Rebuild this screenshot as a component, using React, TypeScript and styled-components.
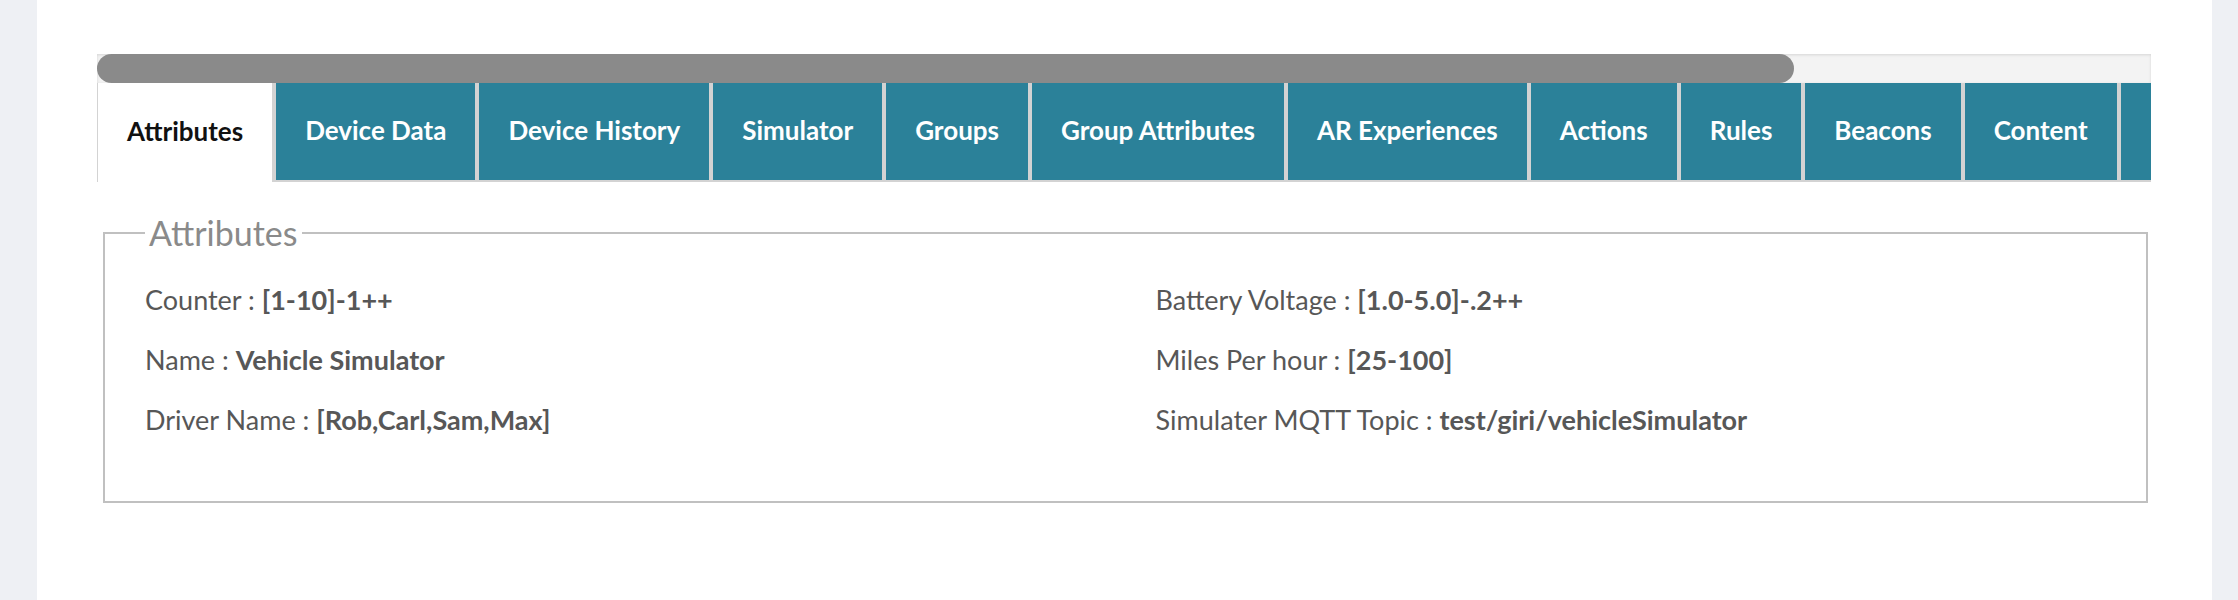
import React from 'react'
import styled, { createGlobalStyle } from 'styled-components'

const GlobalStyle = createGlobalStyle`
  html,
  body {
    margin: 0;
    padding: 0;
    height: 100%;
  }
  body {
    font-family: Lato, 'Noto Sans', sans-serif;
    background: #fff;
  }
  #root {
    height: 100%;
  }
`

const Page = styled.div`
  display: flex;
  height: 100%;
  min-height: 600px;
`
const Rail = styled.div<{ $width: number }>`
  flex: 0 0 ${(p) => p.$width}px;
  background: #eef0f4;
`
const Main = styled.main`
  flex: 1;
  min-width: 0;
  background: #fff;
  padding: 54px 61px 0 60px;
`
const TabsScroller = styled.div`
  overflow: hidden;
`
const ScrollTrack = styled.div`
  height: 29px;
  background: #f3f3f3;
  box-shadow: inset 0 1px 3px rgba(0, 0, 0, 0.12);
`
const ScrollThumb = styled.div`
  height: 100%;
  background: #8a8a8a;
  border-radius: 15px;
`
const TabStrip = styled.div`
  display: flex;
  align-items: flex-start;
  gap: 4px;
  background: #d3d3d3;
  padding: 0 0 2px 1px;
`
const Tab = styled.div<{ $active?: boolean }>`
  flex: 0 0 auto;
  box-sizing: border-box;
  height: ${(p) => (p.$active ? 99 : 97)}px;
  margin-bottom: ${(p) => (p.$active ? -2 : 0)}px;
  padding: 0 29px 4px;
  display: flex;
  align-items: center;
  font-size: 26px;
  font-weight: 700;
  white-space: nowrap;
  color: ${(p) => (p.$active ? '#111' : '#fff')};
  background: ${(p) => (p.$active ? '#fff' : '#2b8199')};
  cursor: pointer;
`
const Fieldset = styled.fieldset`
  margin: 29px 3px 0 6px;
  border: 2px solid #c0c0c0;
  padding: 25px 40px 61px;
  min-width: 0;
`
const Legend = styled.legend`
  padding: 0 4px;
  font-size: 34px;
  line-height: 44px;
  color: #8a8a8a;
`
const AttrGrid = styled.div`
  display: grid;
  grid-template-columns: 1fr 1fr;
  grid-template-rows: repeat(3, 40px);
  grid-auto-flow: column;
  column-gap: 60px;
  row-gap: 20px;
`
const Attr = styled.div`
  font-size: 27px;
  line-height: 40px;
  color: #575757;
  white-space: nowrap;
`
const AttrValue = styled.b`
  font-weight: 700;
`

const tabs = [
  'Attributes',
  'Device Data',
  'Device History',
  'Simulator',
  'Groups',
  'Group Attributes',
  'AR Experiences',
  'Actions',
  'Rules',
  'Beacons',
  'Content',
  'Location',
]

const attributes = [
  { label: 'Counter', value: '[1-10]-1++' },
  { label: 'Name', value: 'Vehicle Simulator' },
  { label: 'Driver Name', value: '[Rob,Carl,Sam,Max]' },
  { label: 'Battery Voltage', value: '[1.0-5.0]-.2++' },
  { label: 'Miles Per hour', value: '[25-100]' },
  { label: 'Simulater MQTT Topic', value: 'test/giri/vehicleSimulator' },
]

// visible part of the tab row vs its full scroll width
const thumbRatio = 1697 / 2054

const App = () => {
  return (
    <>
      <GlobalStyle />
      <Page>
        <Rail $width={37} />
        <Main>
          <TabsScroller>
            <ScrollTrack>
              <ScrollThumb style={{ width: `${thumbRatio * 100}%` }} />
            </ScrollTrack>
            <TabStrip>
              {tabs.map((t, i) => (
                <Tab key={t} $active={i === 0}>
                  {t}
                </Tab>
              ))}
            </TabStrip>
          </TabsScroller>
          <Fieldset>
            <Legend>Attributes</Legend>
            <AttrGrid>
              {attributes.map((a) => (
                <Attr key={a.label}>
                  {a.label} : <AttrValue>{a.value}</AttrValue>
                </Attr>
              ))}
            </AttrGrid>
          </Fieldset>
        </Main>
        <Rail $width={26} />
      </Page>
    </>
  )
}

export default App
